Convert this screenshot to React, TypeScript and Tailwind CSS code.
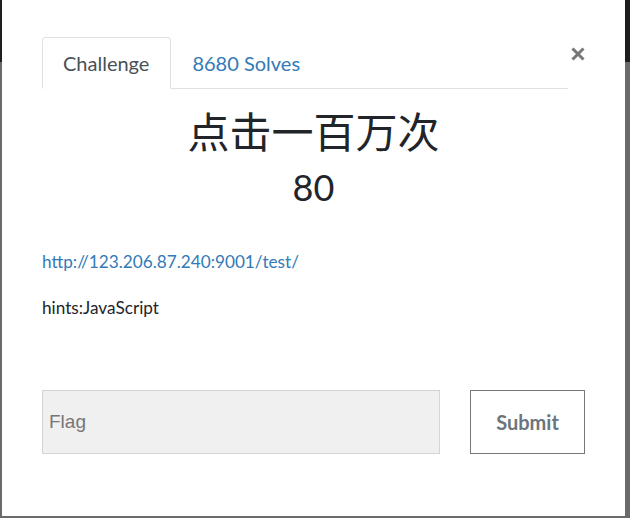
export default function App() {
  return (
    <div className="h-[518px] w-[630px] overflow-hidden bg-[linear-gradient(to_bottom,#1c1e20_0px,#1c1e20_62px,#6a6a6a_62px)]">
      {/* Modal */}
      <div className="ml-[2px] h-[516px] w-[623px] bg-white pl-[40px] pr-[40px] font-['Lato','Noto_Sans_CJK_SC',sans-serif] text-[#212529]">
        {/* Tabs */}
        <div className="flex items-start pt-[37px]">
          <div className="flex flex-1 border-b border-[#dee2e6]">
            <div className="-mb-px flex h-[52px] items-center rounded-t-[4px] border border-b-white border-[#dee2e6] bg-white pl-[20px] pr-[21px] text-[20px] text-[#495057]">
              Challenge
            </div>
            <div className="flex h-[51px] items-center px-[21px] text-[20px] text-[#337ab7]">8680 Solves</div>
          </div>
          <button className="mt-[9px] flex h-[15px] w-[17px] items-center justify-end">
            <svg width="14" height="14" viewBox="0 0 14 14">
              <path d="M1.5 1.5L12.5 12.5M12.5 1.5L1.5 12.5" stroke="#777" strokeWidth="3" strokeLinecap="butt" />
            </svg>
          </button>
        </div>

        {/* Title & value */}
        <div className="text-center">
          <h2 className="mt-[16px] font-['Noto_Sans_CJK_SC',sans-serif] text-[42px] leading-[50px] font-normal text-[#212529]">
            点击一百万次
          </h2>
          <h3 className="mt-[12px] text-[36px] leading-[40px] text-[#212529]">80</h3>
        </div>

        {/* Description */}
        <div className="mt-[43px] text-[17.2px] leading-[24px]">
          <a href="#" className="text-[#337ab7]">http://123.206.87.240:9001/test/</a>
          <p className="mt-[22px] text-[#212529]">hints:JavaScript</p>
        </div>

        {/* Submit form */}
        <div className="mt-[70px] flex gap-[30px]">
          <input
            placeholder="Flag"
            className="h-[64px] flex-1 border border-[#d4d4d4] bg-[#f0f0f0] px-[6px] font-['Liberation_Sans',sans-serif] text-[19px] outline-none placeholder:text-[#777]"
          />
          <button className="h-[64px] w-[115px] border border-[#777] bg-white text-[20px] font-bold text-[#6c757d]">
            Submit
          </button>
        </div>
      </div>
    </div>
  );
}
